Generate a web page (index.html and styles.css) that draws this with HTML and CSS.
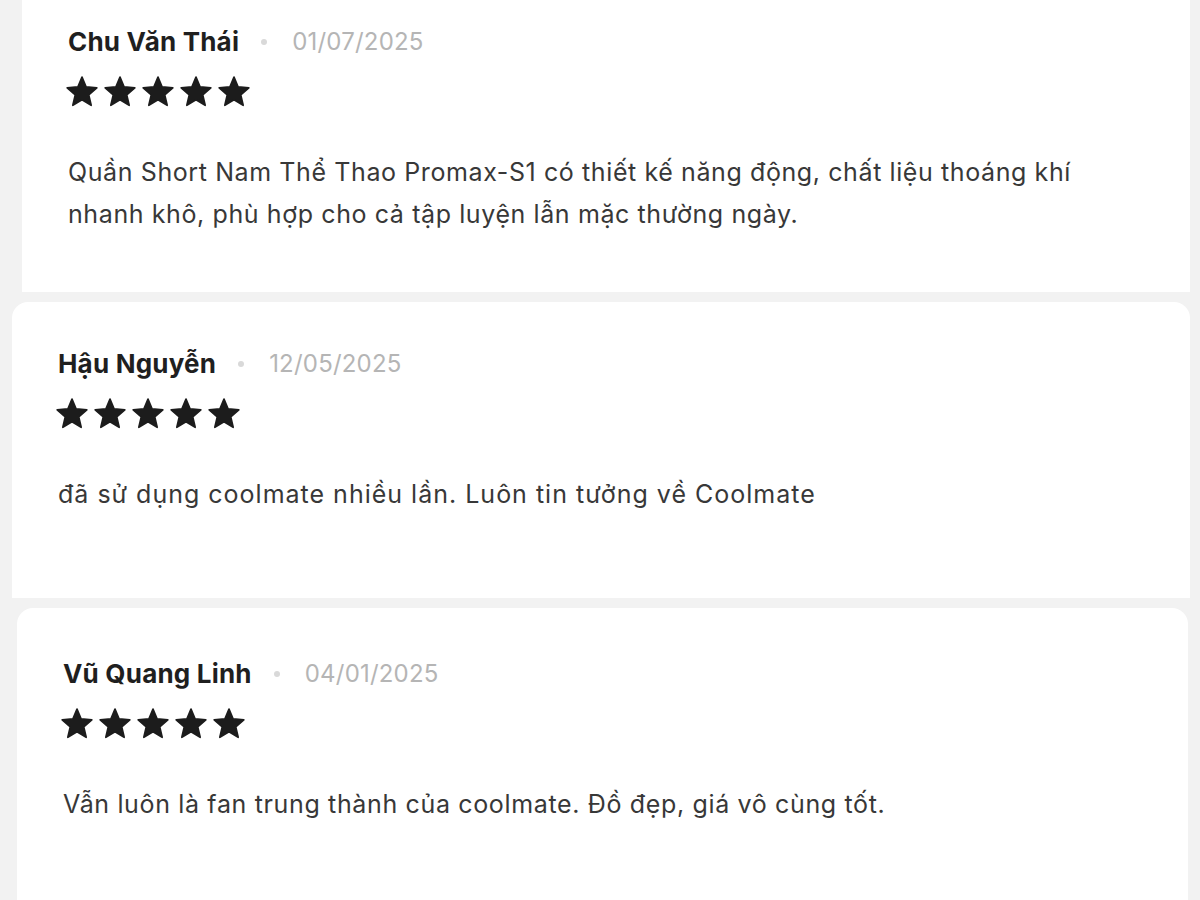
FILE: index.html
```html
<!DOCTYPE html>
<html lang="vi">
<head>
<meta charset="utf-8">
<title>Đánh giá</title>
<link rel="stylesheet" href="styles.css">
</head>
<body>
<div class="reviews">
  <div class="card card--one">
    <div class="head">
      <span class="name">Chu Văn Thái</span>
      <span class="dot"></span>
      <span class="date">01/07/2025</span>
    </div>
    <div class="stars">
      <svg viewBox="0 0 24 24"><path d="M12 1.5L14.94 8.45 22.46 9.1 16.76 14.05 18.47 21.4 12 17.5 5.53 21.4 7.24 14.05 1.54 9.1 9.06 8.45Z"/></svg>
      <svg viewBox="0 0 24 24"><path d="M12 1.5L14.94 8.45 22.46 9.1 16.76 14.05 18.47 21.4 12 17.5 5.53 21.4 7.24 14.05 1.54 9.1 9.06 8.45Z"/></svg>
      <svg viewBox="0 0 24 24"><path d="M12 1.5L14.94 8.45 22.46 9.1 16.76 14.05 18.47 21.4 12 17.5 5.53 21.4 7.24 14.05 1.54 9.1 9.06 8.45Z"/></svg>
      <svg viewBox="0 0 24 24"><path d="M12 1.5L14.94 8.45 22.46 9.1 16.76 14.05 18.47 21.4 12 17.5 5.53 21.4 7.24 14.05 1.54 9.1 9.06 8.45Z"/></svg>
      <svg viewBox="0 0 24 24"><path d="M12 1.5L14.94 8.45 22.46 9.1 16.76 14.05 18.47 21.4 12 17.5 5.53 21.4 7.24 14.05 1.54 9.1 9.06 8.45Z"/></svg>
    </div>
    <p class="text text--one">Quần Short Nam Thể Thao Promax-S1 có thiết kế năng động, chất liệu thoáng khí nhanh khô, phù hợp cho cả tập luyện lẫn mặc thường ngày.</p>
  </div>
  <div class="card card--two">
    <div class="head">
      <span class="name">Hậu Nguyễn</span>
      <span class="dot"></span>
      <span class="date">12/05/2025</span>
    </div>
    <div class="stars">
      <svg viewBox="0 0 24 24"><path d="M12 1.5L14.94 8.45 22.46 9.1 16.76 14.05 18.47 21.4 12 17.5 5.53 21.4 7.24 14.05 1.54 9.1 9.06 8.45Z"/></svg>
      <svg viewBox="0 0 24 24"><path d="M12 1.5L14.94 8.45 22.46 9.1 16.76 14.05 18.47 21.4 12 17.5 5.53 21.4 7.24 14.05 1.54 9.1 9.06 8.45Z"/></svg>
      <svg viewBox="0 0 24 24"><path d="M12 1.5L14.94 8.45 22.46 9.1 16.76 14.05 18.47 21.4 12 17.5 5.53 21.4 7.24 14.05 1.54 9.1 9.06 8.45Z"/></svg>
      <svg viewBox="0 0 24 24"><path d="M12 1.5L14.94 8.45 22.46 9.1 16.76 14.05 18.47 21.4 12 17.5 5.53 21.4 7.24 14.05 1.54 9.1 9.06 8.45Z"/></svg>
      <svg viewBox="0 0 24 24"><path d="M12 1.5L14.94 8.45 22.46 9.1 16.76 14.05 18.47 21.4 12 17.5 5.53 21.4 7.24 14.05 1.54 9.1 9.06 8.45Z"/></svg>
    </div>
    <p class="text text--two">đã sử dụng coolmate nhiều lần. Luôn tin tưởng về Coolmate</p>
  </div>
  <div class="card card--three">
    <div class="head">
      <span class="name">Vũ Quang Linh</span>
      <span class="dot"></span>
      <span class="date">04/01/2025</span>
    </div>
    <div class="stars">
      <svg viewBox="0 0 24 24"><path d="M12 1.5L14.94 8.45 22.46 9.1 16.76 14.05 18.47 21.4 12 17.5 5.53 21.4 7.24 14.05 1.54 9.1 9.06 8.45Z"/></svg>
      <svg viewBox="0 0 24 24"><path d="M12 1.5L14.94 8.45 22.46 9.1 16.76 14.05 18.47 21.4 12 17.5 5.53 21.4 7.24 14.05 1.54 9.1 9.06 8.45Z"/></svg>
      <svg viewBox="0 0 24 24"><path d="M12 1.5L14.94 8.45 22.46 9.1 16.76 14.05 18.47 21.4 12 17.5 5.53 21.4 7.24 14.05 1.54 9.1 9.06 8.45Z"/></svg>
      <svg viewBox="0 0 24 24"><path d="M12 1.5L14.94 8.45 22.46 9.1 16.76 14.05 18.47 21.4 12 17.5 5.53 21.4 7.24 14.05 1.54 9.1 9.06 8.45Z"/></svg>
      <svg viewBox="0 0 24 24"><path d="M12 1.5L14.94 8.45 22.46 9.1 16.76 14.05 18.47 21.4 12 17.5 5.53 21.4 7.24 14.05 1.54 9.1 9.06 8.45Z"/></svg>
    </div>
    <p class="text text--three">Vẫn luôn là fan trung thành của coolmate. Đồ đẹp, giá vô cùng tốt.</p>
  </div>
</div>
</body>
</html>
```

FILE: styles.css
```css
html, body {
  margin: 0;
  padding: 0;
}

body {
  width: 1200px;
  height: 900px;
  overflow: hidden;
  background: #f2f2f2;
  font-family: "Inter", "Liberation Sans", sans-serif;
}

.reviews {
  display: flex;
  flex-direction: column;
  gap: 10px;
}

.card {
  box-sizing: border-box;
  background: #ffffff;
  padding-left: 46px;
  padding-right: 46px;
  border-radius: 16px 16px 0 0;
}

.card--one {
  margin-left: 22px;
  margin-right: 10px;
  height: 292px;
  padding-top: 26px;
  border-radius: 0;
}

.card--two {
  margin-left: 12px;
  margin-right: 10px;
  height: 296px;
  padding-top: 46px;
}

.card--three {
  margin-left: 17px;
  margin-right: 12px;
  height: 320px;
  padding-top: 50px;
}

.head {
  display: flex;
  align-items: center;
  height: 32px;
}

.name {
  font-size: 26px;
  font-weight: 700;
  color: #1f1f1f;
  letter-spacing: 0.2px;
  line-height: 32px;
}

.dot {
  width: 6px;
  height: 6px;
  border-radius: 50%;
  background: #d9d9d9;
  margin: 0 25px 0 22px;
}

.date {
  font-size: 24px;
  font-weight: 400;
  color: #b5b5b5;
  letter-spacing: 0.2px;
  line-height: 32px;
}

.stars {
  display: flex;
  gap: 4px;
  margin-top: 17px;
  margin-left: -3px;
  height: 34px;
}

.stars svg {
  width: 34px;
  height: 34px;
  fill: #1c1c1c;
  stroke: #1c1c1c;
  stroke-width: 1.2;
  stroke-linejoin: round;
}

.text {
  margin: 42px 0 0 0;
  font-size: 25px;
  line-height: 42px;
  color: #383838;
}

.text--one {
  letter-spacing: 0.6px;
  max-width: 1016px;
}

.text--two {
  letter-spacing: 1px;
}

.text--three {
  letter-spacing: 0.65px;
}
```
